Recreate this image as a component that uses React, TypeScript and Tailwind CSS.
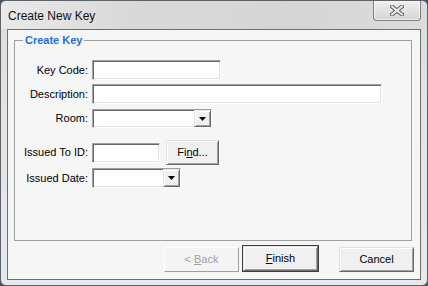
const raised =
  "border border-t-[#e3e3e3] border-l-[#e3e3e3] border-r-[#696969] border-b-[#696969] shadow-[inset_1px_1px_0_#ffffff,inset_-1px_-1px_0_#a0a0a0] bg-[#f0f0f0]";
const sunken =
  "border border-t-[#a0a0a0] border-l-[#a0a0a0] border-r-white border-b-white shadow-[inset_1px_1px_0_#696969,inset_-1px_-1px_0_#e3e3e3] bg-white";

function Field({ label, children, className = "" }: any) {
  return (
    <div className={`flex items-center ${className}`}>
      <div className="w-[74px] text-right pr-[1px] leading-[13px]">{label}</div>
      <div className="ml-[3px] flex items-center">{children}</div>
    </div>
  );
}

function Combo({ width }: { width: string }) {
  return (
    <div className={`${sunken} ${width} h-[19px] flex justify-end`}>
      <div className={`${raised} w-[17px] h-full flex items-center justify-center`}>
        <svg width="7" height="4" viewBox="0 0 7 4">
          <path d="M0 0h7L3.5 4z" fill="#000" />
        </svg>
      </div>
    </div>
  );
}

function DlgButton({ children, disabled, isDefault }: any) {
  const base = `w-[75px] h-[25px] flex items-center justify-center leading-[13px] ${
    disabled ? "text-[#a0a0a0]" : "text-black"
  }`;
  if (isDefault) {
    return (
      <div className="border border-[#404040]">
        <div className={`${raised} ${base} w-[73px] h-[23px]`}>{children}</div>
      </div>
    );
  }
  return (
    <div
      className={`${base} ${
        disabled
          ? "border border-t-[#ffffff] border-l-[#ffffff] border-r-[#a0a0a0] border-b-[#a0a0a0] bg-[#f4f4f4]"
          : raised
      }`}
    >
      {children}
    </div>
  );
}

export default function App() {
  return (
    <div className="w-[428px] h-[286px] bg-[#4a5460] font-['Liberation_Sans',Arial,sans-serif] text-[11px] text-black">
      <div className="w-[428px] h-[286px] rounded-[6px] border border-[#5e6368] bg-[linear-gradient(180deg,#dcdcdc_0%,#e2e4e6_40%,#e6e9ec_100%)] flex flex-col">
        <div className="h-[28px] flex items-start justify-between bg-[linear-gradient(90deg,#e9e9e9_0%,#d9d9d9_30%,#d6d6d6_70%,#dcdcdc_100%)] rounded-t-[5px]">
          <div className="pl-[7px] pt-[8px] text-[12px] leading-[14px] text-[#111]">Create New Key</div>
          <div className="mr-[6px] w-[48px] h-[20px] rounded-b-[4px] border border-t-0 border-[#7d7d7d] bg-[linear-gradient(180deg,#f0f0f0_0%,#e2e2e2_50%,#d4d4d4_100%)] shadow-[inset_0_0_0_1px_rgba(255,255,255,0.6)] flex items-center justify-center">
            <svg width="14" height="11" viewBox="0 0 14 11">
              <path d="M2 1.5L12 9.5M12 1.5L2 9.5" stroke="#5a5a5a" strokeWidth="4" strokeLinecap="square" />
              <path d="M2 1.5L12 9.5M12 1.5L2 9.5" stroke="#ececec" strokeWidth="2" strokeLinecap="square" />
            </svg>
          </div>
        </div>
        <div className="flex-1 mx-[6px] mb-[5px] border border-[#6e6e6e] bg-[#f6f6f6] flex flex-col">
          <fieldset className="mt-[4px] ml-[6px] mr-[8px] h-[207px] border border-[#a0a0a0] p-0">
            <legend className="ml-[8px] px-[2px] font-bold text-[#1a6fdc] leading-[13px]">Create Key</legend>
            <Field label="Key Code:" className="mt-[13px]">
              <div className={`${sunken} w-[129px] h-[20px]`} />
            </Field>
            <Field label="Description:" className="mt-[4px]">
              <div className={`${sunken} w-[290px] h-[20px]`} />
            </Field>
            <Field label="Room:" className="mt-[5px]">
              <Combo width="w-[120px]" />
            </Field>
            <Field label="Issued To ID:" className="mt-[12px] h-[25px]">
              <div className={`${sunken} w-[68px] h-[20px]`} />
              <div className={`${raised} ml-[6px] w-[53px] h-[25px] flex items-center justify-center leading-[13px]`}>
                <span>
                  Fi<span className="underline">n</span>d...
                </span>
              </div>
            </Field>
            <Field label="Issued Date:" className="mt-[3px]">
              <div className="h-[20px] flex">
                <div className={`${sunken} w-[89px] h-[20px] flex justify-end`}>
                  <div className={`${raised} w-[17px] h-full flex items-center justify-center`}>
                    <svg width="7" height="4" viewBox="0 0 7 4">
                      <path d="M0 0h7L3.5 4z" fill="#000" />
                    </svg>
                  </div>
                </div>
              </div>
            </Field>
          </fieldset>
          <div className="flex items-end justify-end mt-auto mb-[7px] mr-[6px]">
            <DlgButton disabled>
              <span>
                &lt; <span className="underline">B</span>ack
              </span>
            </DlgButton>
            <div className="ml-[3px]">
              <DlgButton isDefault>
                <span>
                  <span className="underline">F</span>inish
                </span>
              </DlgButton>
            </div>
            <div className="ml-[20px]">
              <DlgButton>Cancel</DlgButton>
            </div>
          </div>
        </div>
      </div>
    </div>
  );
}
